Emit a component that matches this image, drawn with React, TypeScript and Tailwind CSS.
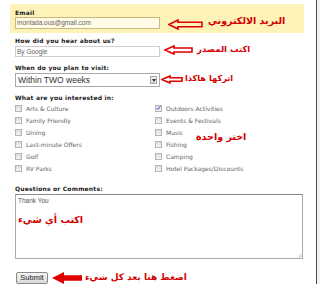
import React from 'react';

const label = "font-['DejaVu_Sans',sans-serif] font-bold text-[6px] leading-[9px] h-[9px] text-[#1a1a1a] tracking-[0.2px]";
const arabic = "font-['DejaVu_Sans',sans-serif] font-bold text-[#d40000] whitespace-nowrap";

const HollowArrow = ({ w, h, fill = 'none' }: { w: number; h: number; fill?: string }) => {
  const hl = Math.round(h * 0.95);
  const top = h * 0.3;
  const bot = h * 0.7;
  return (
    <svg width={w} height={h} viewBox={`0 0 ${w} ${h}`} className="shrink-0">
      <path
        d={`M1 ${h / 2} L${hl} 1 L${hl} ${top} L${w - 1} ${top} L${w - 1} ${bot} L${hl} ${bot} L${hl} ${h - 1} Z`}
        fill={fill}
        stroke="#e00000"
        strokeWidth="1.6"
        strokeLinejoin="miter"
      />
    </svg>
  );
};

const SolidArrow = ({ w, h }: { w: number; h: number }) => (
  <svg width={w} height={h} viewBox={`0 0 ${w} ${h}`} className="shrink-0">
    <path d={`M0 ${h / 2} L${h} 0 L${h} ${h * 0.28} L${w} ${h * 0.28} L${w} ${h * 0.72} L${h} ${h * 0.72} L${h} ${h} Z`} fill="#e00000" />
  </svg>
);

const Box = ({ checked }: { checked?: boolean }) => (
  <div className="w-[7px] h-[7px] border border-[#b5b5b5] bg-gradient-to-b from-[#dcdcdc] to-[#f4f4f4] shrink-0 flex items-center justify-center">
    {checked && (
      <svg width="6" height="6" viewBox="0 0 6 6">
        <path d="M0.8 3.2 L2.3 4.8 L5.3 0.8" fill="none" stroke="#3a57b0" strokeWidth="1.1" />
      </svg>
    )}
  </div>
);

const interests: [string, boolean][] = [
  ['Arts & Culture', false],
  ['Outdoors Activities', true],
  ['Family Friendly', false],
  ['Events & Festivals', false],
  ['Dining', false],
  ['Music', false],
  ['Last-minute Offers', false],
  ['Fishing', false],
  ['Golf', false],
  ['Camping', false],
  ['RV Parks', false],
  ['Hotel Packages/Discounts', false],
];

export default function App() {
  return (
    <div className="flex w-[320px] h-[284px] bg-white overflow-hidden">
      <div className="w-[316px] pt-[4px] flex flex-col">
        {/* email, highlighted */}
        <div className="ml-[10px] w-[294px] h-[29px] bg-[#fdf3b8] pl-[5px] pt-[4px] flex items-start">
          <div className="w-[145px] shrink-0">
            <div className={label}>Email</div>
            <div className="h-[12px] border border-[#c9b980] bg-[#fffbe6] px-[1px] text-[6.5px] leading-[10px] text-[#666] font-['Liberation_Sans',sans-serif]">
              montada.ous@gmail.com
            </div>
          </div>
          <div className="ml-[8px] mt-[11px]">
            <HollowArrow w={35} h={11} fill="#fdf3b8" />
          </div>
          <div dir="rtl" className={`${arabic} ml-[5px] mt-[6px] text-[9.5px] leading-[14px]`}>البريد الالكتروني</div>
        </div>

        {/* source */}
        <div className="ml-[15px] mt-[3px] flex items-start">
          <div className="w-[145px] shrink-0">
            <div className={label}>How did you hear about us?</div>
            <div className="mt-[1px] h-[11px] border border-[#cfcfcf] bg-white px-[1px] text-[6.5px] leading-[9px] text-[#666] font-['Liberation_Sans',sans-serif]">
              By Google
            </div>
          </div>
          <div className="ml-[4px] mt-[9px]">
            <HollowArrow w={29} h={10} />
          </div>
          <div dir="rtl" className={`${arabic} ml-[4px] mt-[7px] text-[8.5px] leading-[12px]`}>اكتب المصدر</div>
        </div>

        {/* visit */}
        <div className="ml-[15px] mt-[6px] flex items-start">
          <div className="w-[145px] shrink-0">
            <div className={label}>When do you plan to visit:</div>
            <div className="mt-[1px] h-[14px] border border-[#a9a9a9] bg-white pl-[2px] pr-[2px] flex items-center justify-between">
              <span className="text-[8.5px] leading-[12px] text-[#333] font-['Liberation_Sans',sans-serif]">Within TWO weeks</span>
              <div className="w-[7px] h-[8px] border border-[#a8a8a8] bg-gradient-to-b from-[#f2f2f2] to-[#d8d8d8] flex items-center justify-center">
                <svg width="4" height="3" viewBox="0 0 4 3">
                  <path d="M0 0 L4 0 L2 3 Z" fill="#333" />
                </svg>
              </div>
            </div>
          </div>
          <div className="ml-[1px] mt-[12px]">
            <HollowArrow w={22} h={9} />
          </div>
          <div dir="rtl" className={`${arabic} ml-[2px] mt-[9px] text-[8.2px] leading-[12px]`}>اتركها هاكذا</div>
        </div>

        {/* interests */}
        <div className="ml-[15px] mt-[6px]">
          <div className={label}>What are you interested in:</div>
          <div className="relative grid grid-cols-[140px_1fr]">
            {interests.map(([name, checked]) => (
              <div key={name} className="h-[12px] flex items-center gap-[4px]">
                <Box checked={checked} />
                <span className="font-['DejaVu_Sans',sans-serif] text-[6px] text-[#666] whitespace-nowrap">{name}</span>
              </div>
            ))}
            <div dir="rtl" className={`${arabic} absolute left-[181px] top-[28px] text-[9.5px] leading-[13px]`}>اختر واحدة</div>
          </div>
        </div>

        {/* comments */}
        <div className="ml-[15px] mt-[10px]">
          <div className={label}>Questions or Comments:</div>
          <div className="mt-[1px] w-[288px] h-[65px] border border-[#ababab] border-t-[#8a8a8a] bg-white px-[2px] pt-[1px] relative">
            <div className="text-[6.5px] leading-[9px] text-[#555] font-['Liberation_Sans',sans-serif]">Thank You</div>
            <div dir="rtl" className={`${arabic} w-fit mt-[8px] text-[9.5px] leading-[13px]`}>اكتب أي شيء</div>
            <svg width="5" height="5" viewBox="0 0 5 5" className="absolute right-0 bottom-0">
              <path d="M1 4.5 L4.5 1 M3 4.5 L4.5 3" stroke="#aaa" strokeWidth="0.8" />
            </svg>
          </div>
        </div>

        {/* submit */}
        <div className="ml-[16px] mt-[12px] flex items-center">
          <div className="w-[32px] h-[12px] border border-[#8a8a8a] rounded-[2px] bg-gradient-to-b from-[#f4f4f4] to-[#d9d9d9] text-[7.5px] leading-[10px] text-center text-[#222] font-['Liberation_Sans',sans-serif]">
            Submit
          </div>
          <div className="ml-[4px]">
            <SolidArrow w={30} h={12} />
          </div>
          <div dir="rtl" className={`${arabic} ml-[3px] text-[9px] leading-[13px]`}>اضغط هنا بعد كل شيء</div>
        </div>
      </div>
      <div className="w-px bg-[#4a4a4a]" />
      <div className="w-[3px] bg-[#f7f1ee]" />
    </div>
  );
}
